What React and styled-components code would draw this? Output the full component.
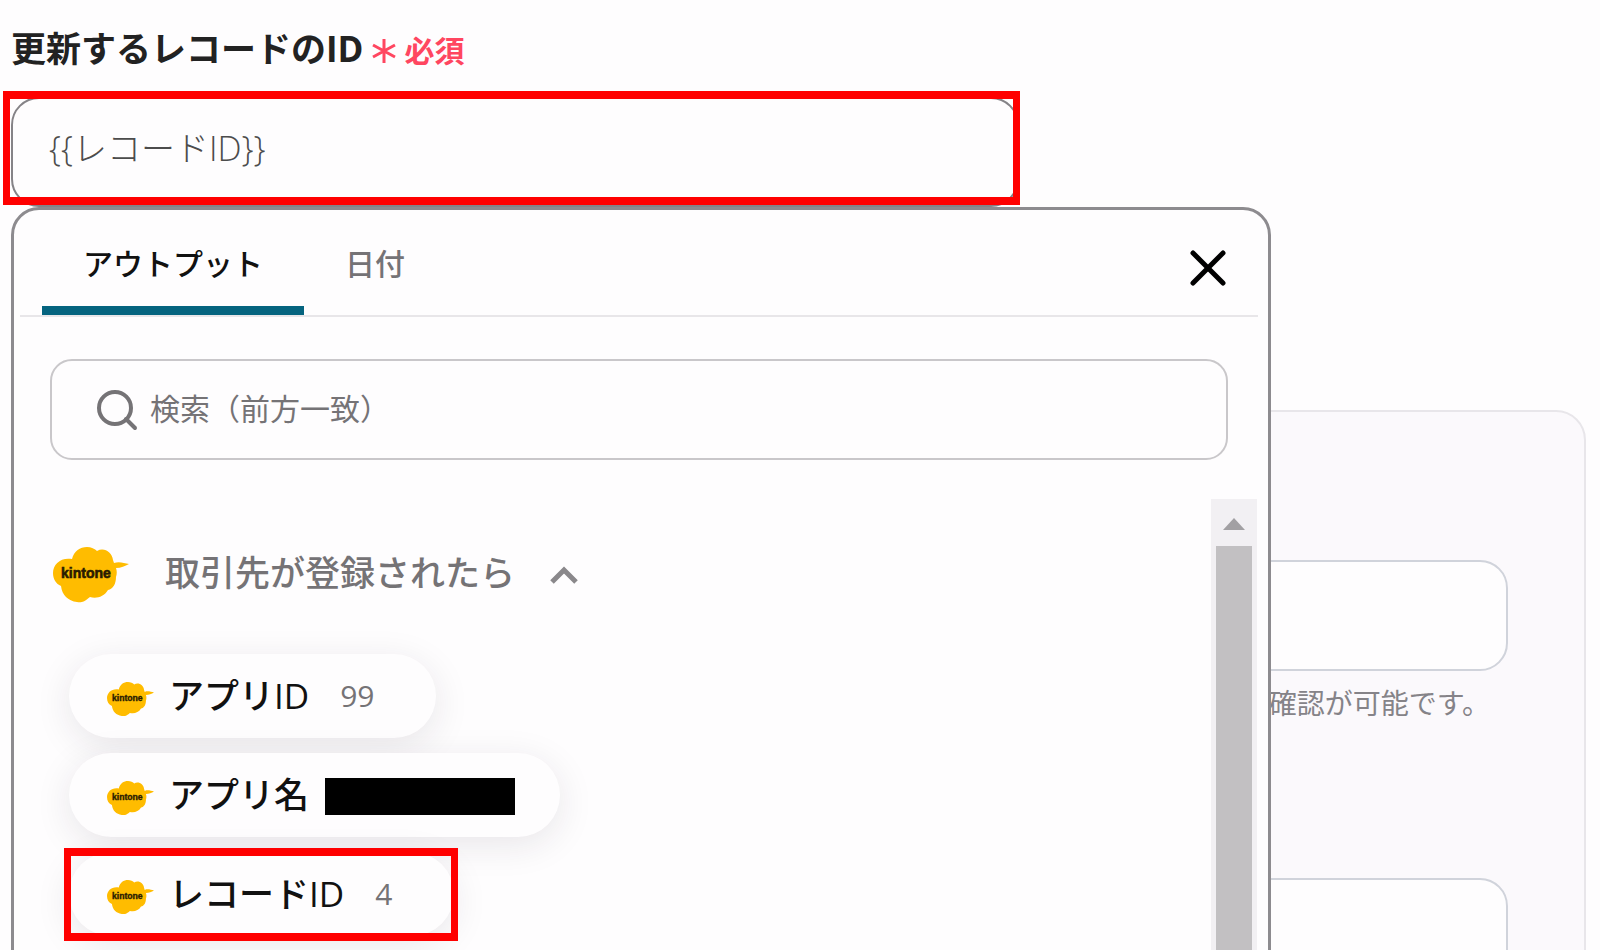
import { useState } from "react";
import styled, { createGlobalStyle } from "styled-components";

const GlobalStyle = createGlobalStyle`
  * {
    box-sizing: border-box;
  }

  body {
    margin: 0;
    overflow: hidden;
    background: #fefdfe;
    color: #222222;
    font-family: "Open Sans", "Noto Sans CJK JP", sans-serif;
  }

  button,
  input {
    font-family: inherit;
    color: inherit;
  }
`;

const Page = styled.main`
  height: 100vh;
  overflow: hidden;
  padding: 24px 14px 0 11px;
`;

const LabelRow = styled.div`
  display: flex;
  align-items: center;
  height: 50px;
  margin-bottom: 23px;
`;

const Label = styled.label`
  font-size: 35px;
  line-height: 48px;
  font-weight: 700;
`;

const Required = styled.span`
  display: flex;
  align-items: center;
  gap: 8px;
  padding: 4px 0 0 8px;
  font-size: 30px;
  line-height: 44px;
  font-weight: 600;
  color: #ff4660;
`;

const Field = styled.div`
  position: relative;
`;

const Highlighted = styled.div`
  position: relative;
  width: ${({ $width }) => $width || "fit-content"};

  &::after {
    content: "";
    position: absolute;
    z-index: 2;
    inset: ${({ $inset }) => $inset};
    border: solid #ff0000;
    border-width: 8px 7px;
    pointer-events: none;
  }
`;

const ValueInput = styled.input`
  display: block;
  width: 100%;
  height: 110px;
  padding: 0 36px 12px;
  border: 2px solid #858387;
  border-radius: 28px;
  outline: none;
  background: #fefdfe;
  font-size: 34px;
  font-weight: 300;
  color: #4c4c4c;
`;

const Panel = styled.section`
  position: absolute;
  z-index: 1;
  top: 100%;
  left: 0;
  width: 80%;
  height: 800px;
  border: 3px solid #8d8b8f;
  border-radius: 28px;
  background: #fefdfe;
`;

const PanelHeader = styled.div`
  display: flex;
  justify-content: space-between;
  height: 107px;
  margin: 0 10px 0 6px;
  padding: 0 32px 0 22px;
  border-bottom: 2px solid #e8e6e9;
`;

const Tabs = styled.div`
  display: flex;
`;

const Tab = styled.button`
  padding: 12px 41px 0;
  border: none;
  border-bottom: 9px solid
    ${({ $active }) => ($active ? "#05647f" : "transparent")};
  border-radius: 6px 6px 0 0;
  background: none;
  font-size: 30px;
  line-height: 40px;
  font-weight: 500;
  color: ${({ $active }) => ($active ? "#111111" : "#757376")};
  cursor: pointer;
`;

const IconButton = styled.button`
  display: flex;
  align-items: center;
  padding: 10px 0 0;
  border: none;
  background: none;
  color: #000000;
  cursor: pointer;
`;

const SearchBox = styled.label`
  display: flex;
  align-items: center;
  gap: 12px;
  height: 101px;
  margin: 42px 40px 39px 36px;
  padding: 0 44px;
  border: 2px solid #c9c7ca;
  border-radius: 22px;
  color: #757376;
`;

const SearchInput = styled.input`
  flex: 1;
  min-width: 0;
  padding: 0 0 2px;
  border: none;
  outline: none;
  background: none;
  font-size: 30px;
  line-height: 44px;

  &::placeholder {
    color: #757376;
    opacity: 1;
  }
`;

const ListArea = styled.div`
  display: flex;
  justify-content: space-between;
  height: 600px;
  padding-right: 11px;
`;

const List = styled.div`
  padding: 46px 0 0 39px;
`;

const GroupButton = styled.button`
  display: flex;
  align-items: center;
  height: 60px;
  margin-bottom: 49px;
  padding: 0;
  border: none;
  background: none;
  font-size: 35px;
  line-height: 48px;
  font-weight: 500;
  color: #757376;
  cursor: pointer;
`;

const GroupName = styled.span`
  margin: 0 34px 0 36px;
  padding-bottom: 5px;
`;

const Chips = styled.div`
  display: flex;
  flex-direction: column;
  align-items: flex-start;
  gap: 15px;
  padding-left: 16px;
`;

const ChipButton = styled.button`
  display: flex;
  align-items: center;
  height: 84px;
  padding: 0 ${({ $masked }) => ($masked ? "45px" : "62px")} 0 38px;
  border: none;
  border-radius: 42px;
  background: #fefdfe;
  box-shadow: 0 8px 36px rgba(40, 30, 50, 0.1);
  font-size: 35px;
  line-height: 48px;
  font-weight: 500;
  color: #111111;
  cursor: pointer;

  svg {
    margin-top: 6px;
  }
`;

const ChipName = styled.span`
  margin-left: 15px;
`;

const ChipValue = styled.span`
  margin-left: 31px;
  font-size: 30px;
  font-weight: 400;
  color: #757376;
`;

const Mask = styled.span`
  width: 190px;
  height: 37px;
  margin: 3px 0 0 16px;
  background: #000000;
`;

const ScrollTrack = styled.div`
  display: flex;
  flex-direction: column;
  align-items: center;
  width: 46px;
  background: #f2f0f3;
`;

const ScrollArrow = styled.div`
  height: 12px;
  margin: 19px 0 16px;
  border: solid transparent;
  border-width: 0 11px 12px;
  border-bottom-color: #a2a0a3;
`;

const ScrollThumb = styled.div`
  flex: 1;
  width: 36px;
  background: #c2c0c2;
`;

const Card = styled.section`
  height: 700px;
  margin-top: 203px;
  padding: 148px 76px 0 40px;
  border: 2px solid #e8e6ea;
  border-radius: 30px;
  background: #fbf9fc;
`;

const CardInput = styled.input`
  display: block;
  width: 100%;
  height: 111px;
  padding: 0 36px;
  border: 2px solid #d0d3db;
  border-radius: 28px;
  outline: none;
  background: #fefdfe;
  font-size: 35px;
`;

const Hint = styled.p`
  margin: 12px 18px 155px 0;
  font-size: 28px;
  line-height: 40px;
  text-align: right;
  color: #858388;
`;

const KintoneLogo = ({ width }) => (
  <svg width={width} viewBox="0 0 76 56" aria-hidden="true">
    <path
      d="M0 26C0 17 8 10 19 12C21 4 27 0 34 0C38 0 42 2 44 4C51 0 59 5 60 13L61 16C66 14 71 16 76 17C72 19 68 21 63 21C64 24 64 27 63 30C63 37 60 42 55 43C51 50 43 52 37 50C31 55 28 56 24 55C15 54 9 48 8 39C3 37 0 32 0 26Z"
      fill="#ffbc00"
    />
    <text
      x="8"
      y="31"
      fontFamily="Liberation Sans"
      fontSize="14"
      fontWeight="700"
      fill="#2a1c00"
      stroke="#2a1c00"
      strokeWidth="0.6"
    >
      kintone
    </text>
  </svg>
);

const CloseIcon = () => (
  <svg width="36" height="36" viewBox="0 0 36 36" fill="none">
    <path
      d="M3 3L33 33M33 3L3 33"
      stroke="currentColor"
      strokeWidth="5"
      strokeLinecap="round"
    />
  </svg>
);

const SearchIcon = () => (
  <svg width="42" height="42" viewBox="0 0 42 42" fill="none">
    <circle cx="19" cy="19" r="16" stroke="currentColor" strokeWidth="4" />
    <path
      d="M30 30L39 39"
      stroke="currentColor"
      strokeWidth="4"
      strokeLinecap="round"
    />
  </svg>
);

const ChevronIcon = ({ open }) => (
  <svg width="30" height="18" viewBox="0 0 30 18" fill="none">
    <path
      d={open ? "M3 16L15 4L27 16" : "M3 4L15 16L27 4"}
      stroke="#8a888b"
      strokeWidth="5"
    />
  </svg>
);

const AsteriskIcon = () => (
  <svg width="25" height="26" viewBox="0 0 25 26" fill="none">
    <path
      d="M12 1V25M1 7L23 19M23 7L1 19"
      stroke="currentColor"
      strokeWidth="3"
    />
  </svg>
);

const Chip = ({ name, value, masked }) => (
  <ChipButton type="button" $masked={masked}>
    <KintoneLogo width="47" />
    <ChipName>{name}</ChipName>
    {masked ? <Mask /> : <ChipValue>{value}</ChipValue>}
  </ChipButton>
);

const tabs = ["アウトプット", "日付"];

const App = () => {
  const [recordId, setRecordId] = useState("{{レコードID}}");
  const [activeTab, setActiveTab] = useState(tabs[0]);
  const [open, setOpen] = useState(true);

  return (
    <Page>
      <GlobalStyle />
      <LabelRow>
        <Label htmlFor="record-id">更新するレコードのID</Label>
        <Required>
          <AsteriskIcon />
          必須
        </Required>
      </LabelRow>
      <Field>
        <Highlighted $width="64%" $inset="-6px -1px 2px -8px">
          <ValueInput
            id="record-id"
            type="text"
            value={recordId}
            onChange={(e) => setRecordId(e.target.value)}
          />
        </Highlighted>
        <Panel>
          <PanelHeader>
            <Tabs role="tablist">
              {tabs.map((tab) => (
                <Tab
                  key={tab}
                  type="button"
                  role="tab"
                  aria-selected={tab === activeTab}
                  $active={tab === activeTab}
                  onClick={() => setActiveTab(tab)}
                >
                  {tab}
                </Tab>
              ))}
            </Tabs>
            <IconButton type="button" aria-label="閉じる">
              <CloseIcon />
            </IconButton>
          </PanelHeader>
          <SearchBox>
            <SearchIcon />
            <SearchInput
              type="text"
              aria-label="検索"
              placeholder="検索（前方一致）"
            />
          </SearchBox>
          <ListArea>
            <List>
              <GroupButton
                type="button"
                aria-expanded={open}
                onClick={() => setOpen(!open)}
              >
                <KintoneLogo width="76" />
                <GroupName>取引先が登録されたら</GroupName>
                <ChevronIcon open={open} />
              </GroupButton>
              {open && (
                <Chips>
                  <Chip name="アプリID" value="99" />
                  <Chip name="アプリ名" masked />
                  <Highlighted $inset="-4px -4px -5px -5px">
                    <Chip name="レコードID" value="4" />
                  </Highlighted>
                </Chips>
              )}
            </List>
            <ScrollTrack>
              <ScrollArrow />
              <ScrollThumb />
            </ScrollTrack>
          </ListArea>
        </Panel>
      </Field>
      <Card>
        <CardInput type="text" aria-label="入力項目1" />
        <Hint>確認が可能です。</Hint>
        <CardInput type="text" aria-label="入力項目2" />
      </Card>
    </Page>
  );
};

export default App;
